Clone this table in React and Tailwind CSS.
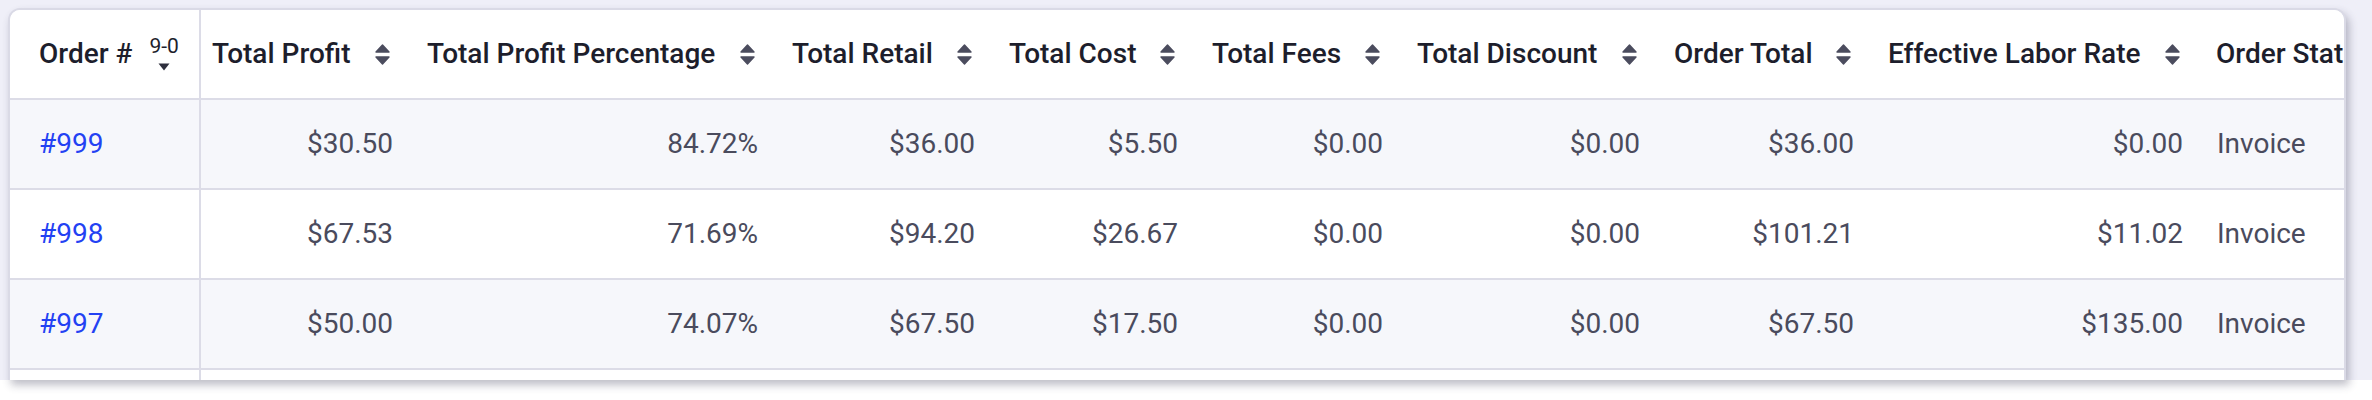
import React from 'react'

const cols = 'grid grid-cols-[191px_215px_365px_217px_203px_205px_257px_214px_329px_260px]'

const headers = [
    'Total Profit',
    'Total Profit Percentage',
    'Total Retail',
    'Total Cost',
    'Total Fees',
    'Total Discount',
    'Order Total',
    'Effective Labor Rate',
]

const rows = [
    { id: '#999', values: ['$30.50', '84.72%', '$36.00', '$5.50', '$0.00', '$0.00', '$36.00', '$0.00'], status: 'Invoice' },
    { id: '#998', values: ['$67.53', '71.69%', '$94.20', '$26.67', '$0.00', '$0.00', '$101.21', '$11.02'], status: 'Invoice' },
    { id: '#997', values: ['$50.00', '74.07%', '$67.50', '$17.50', '$0.00', '$0.00', '$67.50', '$135.00'], status: 'Invoice' },
    { id: '', values: ['', '', '', '', '', '', '', ''], status: '' },
]

const SortIcon = () => (
    <svg width="15" height="21" viewBox="0 0 15 21" className="shrink-0 text-[#4b4c5e]">
        <polygon points="7.5,1 14,8 1,8" fill="currentColor" stroke="currentColor" strokeWidth="1.4" strokeLinejoin="round" />
        <polygon points="1,13 14,13 7.5,20" fill="currentColor" stroke="currentColor" strokeWidth="1.4" strokeLinejoin="round" />
    </svg>
)

const App = () => {
    return (
        <div className="w-[2372px] h-[400px] bg-white overflow-hidden font-['Roboto',sans-serif]">
            <div className="h-[380px] bg-[#efeff8] pt-[8px] pl-[8px]">
                <div className="w-[2338px] h-[372px] bg-white rounded-t-[12px] border-x-2 border-t-2 border-[#dadae6] overflow-hidden shadow-[3px_5px_8px_rgba(40,40,70,0.3)]">
                    <div className="w-[2456px]">
                        {/* header */}
                        <div className={`${cols} h-[90px] border-b-2 border-[#dcdce7] bg-white text-[28px] font-medium text-[#1d1e2c]`}>
                            <div className="flex items-center pl-[29px] border-r-2 border-[#dcdce7]">
                                <span>Order #</span>
                                <div className="ml-[17px] flex flex-col items-center -mt-[2px]">
                                    <span className="text-[21px] font-normal leading-[22px]">9-0</span>
                                    <svg width="12" height="8" viewBox="0 0 12 8" className="mt-[6px] text-[#2e2f3d]">
                                        <polygon points="0.5,0.5 11.5,0.5 6,7.5" fill="currentColor" />
                                    </svg>
                                </div>
                            </div>
                            {headers.map((h) => (
                                <div key={h} className="flex items-center justify-between pl-[11px] pr-[26px] whitespace-nowrap">
                                    <span>{h}</span>
                                    <SortIcon />
                                </div>
                            ))}
                            <div className="flex items-center pl-[10px] whitespace-nowrap">Order Status</div>
                        </div>
                        {/* rows */}
                        {rows.map((r, i) => (
                            <div key={i} className={`${cols} h-[90px] border-b-2 border-[#dcdce7] text-[28px] text-[#4a4b5d] ${i % 2 === 0 ? 'bg-[#f6f7fb]' : 'bg-white'}`}>
                                <div className="flex items-center pl-[29px] border-r-2 border-[#dcdce7]">
                                    <a className="text-[#2341f3]" href="#">{r.id}</a>
                                </div>
                                {r.values.map((v, j) => (
                                    <div key={j} className="flex items-center justify-end pr-[23px]">{v}</div>
                                ))}
                                <div className="flex items-center pl-[11px]">{r.status}</div>
                            </div>
                        ))}
                    </div>
                </div>
            </div>
        </div>
    )
}

export default App
